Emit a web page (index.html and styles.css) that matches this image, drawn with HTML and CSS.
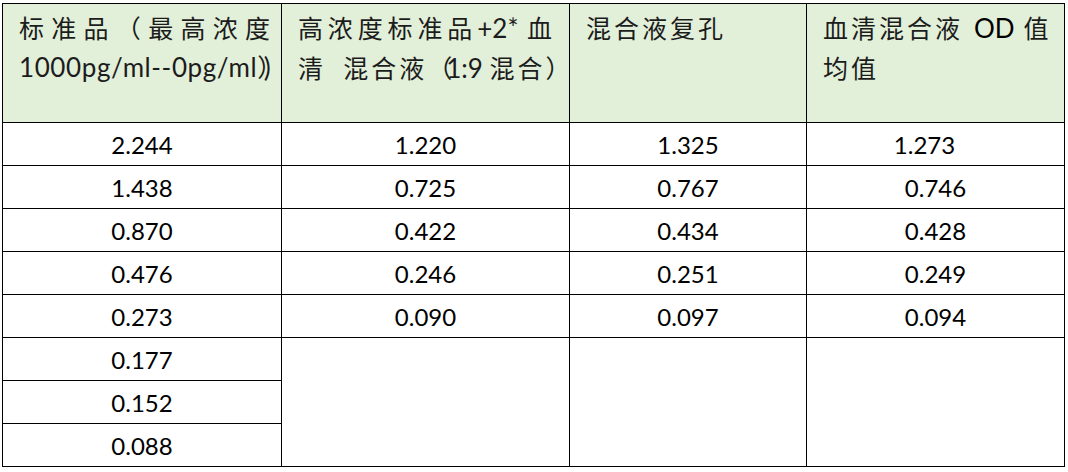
FILE: index.html
```html
<!DOCTYPE html>
<html lang="zh-CN">
<head>
<meta charset="utf-8">
<title>OD 值表</title>
<link rel="stylesheet" href="styles.css">
</head>
<body>
<div class="wrap">
<table class="od">
  <colgroup>
    <col class="c1"><col class="c2"><col class="c3"><col class="c4">
  </colgroup>
  <thead>
    <tr class="head">
      <th class="h h1">
        <div class="ln just">标准品（最高浓度</div>
        <div class="ln"><span class="lat">1000pg/ml--0pg/ml</span><span class="np">）</span><span class="lat">)</span></div>
      </th>
      <th class="h h2">
        <div class="ln just">高浓度标准品<span class="lat">+2* </span>血</div>
        <div class="ln">清&nbsp; 混合液<span class="np">（</span><span class="lat">1:9 </span>混合<span class="np">）</span></div>
      </th>
      <th class="h h3">
        <div class="ln">混合液复孔</div>
      </th>
      <th class="h h4">
        <div class="ln">血清混合液<span class="lat od">OD</span>值</div>
        <div class="ln">均值</div>
      </th>
    </tr>
  </thead>
  <tbody>
    <tr><td>2.244</td><td>1.220</td><td>1.325</td><td class="off">1.273</td></tr>
    <tr><td>1.438</td><td>0.725</td><td>0.767</td><td>0.746</td></tr>
    <tr><td>0.870</td><td>0.422</td><td>0.434</td><td>0.428</td></tr>
    <tr><td>0.476</td><td>0.246</td><td>0.251</td><td>0.249</td></tr>
    <tr><td>0.273</td><td>0.090</td><td>0.097</td><td>0.094</td></tr>
    <tr><td>0.177</td><td rowspan="3" class="empty"></td><td rowspan="3" class="empty"></td><td rowspan="3" class="empty"></td></tr>
    <tr><td>0.152</td></tr>
    <tr><td>0.088</td></tr>
  </tbody>
</table>
</div>
</body>
</html>
```

FILE: styles.css
```css
html, body {
  margin: 0;
  padding: 0;
  background: #ffffff;
}

.wrap {
  padding: 3px 0 0 2px;
}

.od {
  border-collapse: collapse;
  table-layout: fixed;
  width: 1062px;
  font-family: Lato, "Noto Sans CJK SC", sans-serif;
  color: #000;
}

.c1 { width: 279px; }
.c2 { width: 288px; }
.c3 { width: 237px; }
.c4 { width: 258px; }

.od th,
.od td {
  border: 1px solid #000;
}

.od thead tr {
  height: 119px;
}

.od tbody tr {
  height: 43px;
}

.h {
  background: #e2efd9;
  vertical-align: top;
  text-align: left;
  font-weight: normal;
  font-family: "Noto Sans CJK SC", sans-serif;
  font-size: 25px;
  letter-spacing: 3px;
  line-height: 39px;
  color: #1c1c1c;
  padding: 4px 14px 0 16px;
}

.h1 { padding-right: 8px; }

.ln {
  white-space: nowrap;
}

.ln.just {
  text-align: justify;
  text-align-last: justify;
}

.lat {
  font-family: Lato, sans-serif;
  font-size: 26px;
  letter-spacing: 0;
}

.h1 .lat {
  letter-spacing: 0.6px;
}

.lat.od {
  margin: 0 9px 0 11px;
}

.np {
  letter-spacing: -6px;
}

.od td {
  font-size: 24px;
  text-align: center;
  vertical-align: middle;
  padding: 3px 0 0 0;
  line-height: 1.2;
}

.od td.off {
  padding-right: 22px;
}

.od td.empty {
  padding: 0;
}
```
